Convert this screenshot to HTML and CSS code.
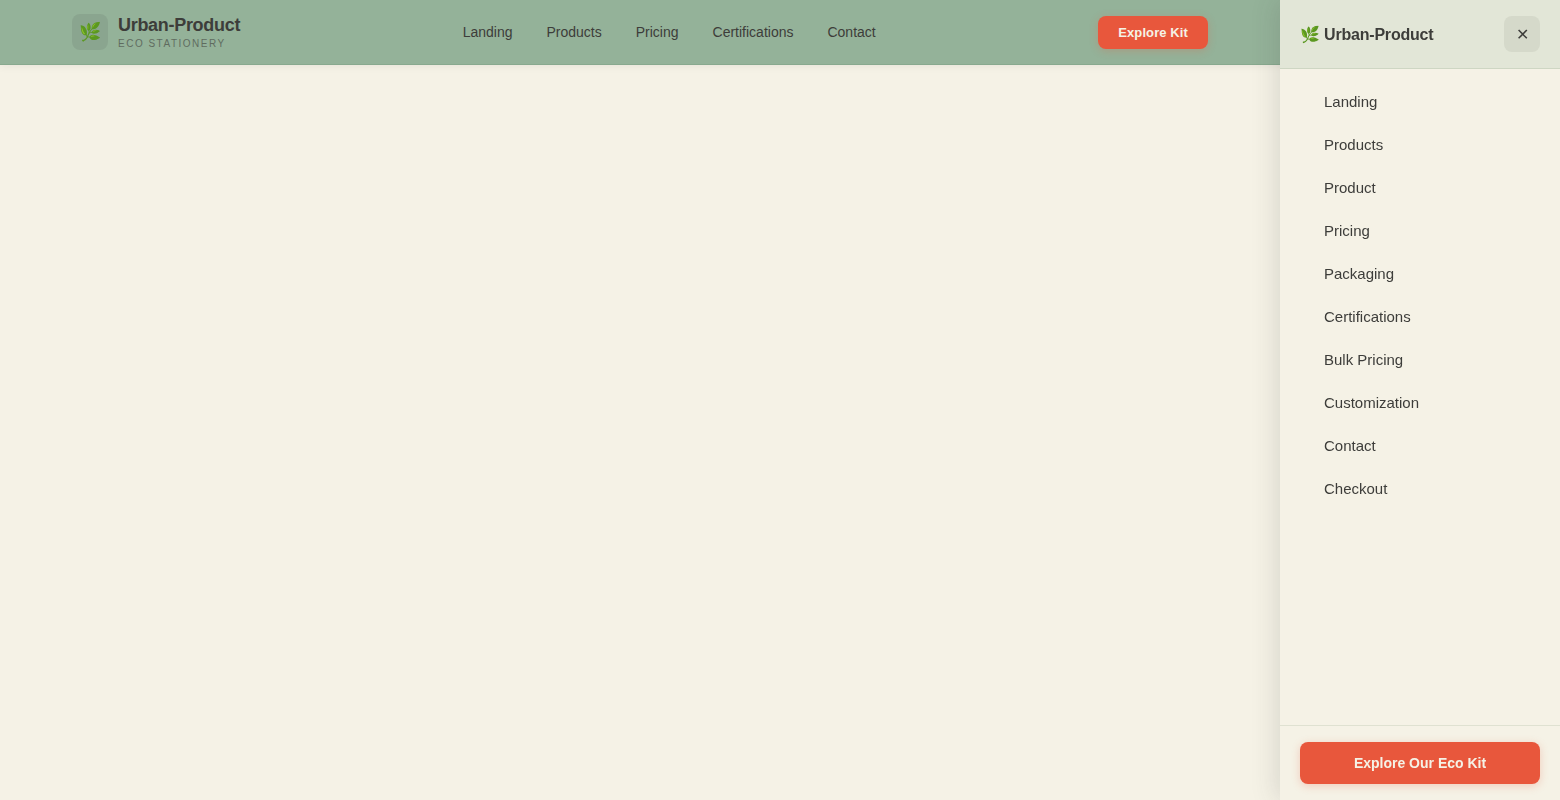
FILE: index.html
```html
<!DOCTYPE html>
<html lang="en">

<head>
    <meta charset="UTF-8">
    <title>Urban-Product</title>
    <link rel="stylesheet" href="styles.css">
</head>

<body>
    <!-- Header -->
    <header class="navbar">
        <div class="navbar-inner">
            <a class="logo" href="#">
                <span class="logo-icon">🌿</span>
                <span class="logo-text">
                    <span class="logo-name">Urban-Product</span>
                    <span class="logo-tagline">Eco Stationery</span>
                </span>
            </a>
            <nav class="nav-links">
                <a href="#">Landing</a>
                <a href="#">Products</a>
                <a href="#">Pricing</a>
                <a href="#">Certifications</a>
                <a href="#">Contact</a>
            </nav>
            <a class="btn nav-cta" href="#">Explore Kit</a>
        </div>
    </header>

    <!-- Side menu -->
    <aside class="drawer">
        <div class="drawer-header">
            <span class="drawer-title">🌿 Urban-Product</span>
            <button class="drawer-close" aria-label="Close menu">✕</button>
        </div>
        <nav class="drawer-links">
            <a href="#">Landing</a>
            <a href="#">Products</a>
            <a href="#">Product</a>
            <a href="#">Pricing</a>
            <a href="#">Packaging</a>
            <a href="#">Certifications</a>
            <a href="#">Bulk Pricing</a>
            <a href="#">Customization</a>
            <a href="#">Contact</a>
            <a href="#">Checkout</a>
        </nav>
        <div class="drawer-footer">
            <a class="btn drawer-cta" href="#">Explore Our Eco Kit</a>
        </div>
    </aside>
</body>

</html>
```
FILE: styles.css
```css
* {
    margin: 0;
    padding: 0;
    box-sizing: border-box;
}

body {
    min-height: 100vh;
    background: #f5f2e6;
    color: #3d3d3a;
    font-family: "Liberation Sans", Arial, sans-serif;
    overflow: hidden;
}

a {
    color: inherit;
    text-decoration: none;
}

/* Header */
.navbar {
    height: 65px;
    padding-right: 280px;
    background: #94b299;
    border-bottom: 1px solid #88a98e;
    box-shadow: 0 1px 8px rgba(61, 61, 58, 0.08);
}

.navbar-inner {
    display: flex;
    align-items: center;
    justify-content: space-between;
    height: 64px;
    padding: 0 72px;
}

.logo {
    display: flex;
    align-items: center;
    gap: 10px;
}

.logo-icon {
    display: flex;
    align-items: center;
    justify-content: center;
    width: 36px;
    height: 36px;
    border-radius: 8px;
    background: rgba(61, 61, 58, 0.1);
    font-size: 18px;
}

.logo-text {
    display: flex;
    flex-direction: column;
}

.logo-name {
    font-size: 18px;
    font-weight: 700;
    line-height: 20px;
    letter-spacing: -0.3px;
}

.logo-tagline {
    margin-top: 2px;
    font-size: 10px;
    line-height: 13px;
    letter-spacing: 1.5px;
    text-transform: uppercase;
    opacity: 0.6;
}

.nav-links {
    display: flex;
    gap: 34px;
    font-size: 14px;
}

.btn {
    background: #e8573c;
    color: #f5f2e6;
    border-radius: 8px;
    font-weight: 700;
    text-align: center;
    box-shadow: 0 2px 8px rgba(232, 87, 60, 0.25);
}

.nav-cta {
    padding: 9px 20px;
    font-size: 13px;
    line-height: 15px;
    letter-spacing: 0.1px;
}

/* Side menu */
.drawer {
    position: fixed;
    top: 0;
    right: 0;
    display: flex;
    flex-direction: column;
    width: 280px;
    height: 100vh;
    background: #f5f2e6;
    box-shadow: -4px 0 24px rgba(61, 61, 58, 0.15);
}

.drawer-header {
    display: flex;
    align-items: center;
    justify-content: space-between;
    height: 69px;
    padding: 0 20px;
    background: #e2e6d7;
    border-bottom: 1px solid #ced6c3;
}

.drawer-title {
    font-size: 16px;
    font-weight: 700;
    letter-spacing: -0.2px;
}

.drawer-close {
    width: 36px;
    height: 36px;
    border: none;
    border-radius: 8px;
    background: #d5d9ca;
    color: #3d3d3a;
    font-family: inherit;
    font-size: 16px;
}

.drawer-links {
    flex: 1;
    padding: 12px 0;
}

.drawer-links a {
    display: block;
    padding: 12px 44px 14px;
    font-size: 15px;
    line-height: 17px;
}

.drawer-footer {
    padding: 16px 20px;
    border-top: 1px solid #dfe1d1;
}

.drawer-cta {
    display: block;
    padding: 13px 20px;
    font-size: 14px;
    line-height: 16px;
}
```
